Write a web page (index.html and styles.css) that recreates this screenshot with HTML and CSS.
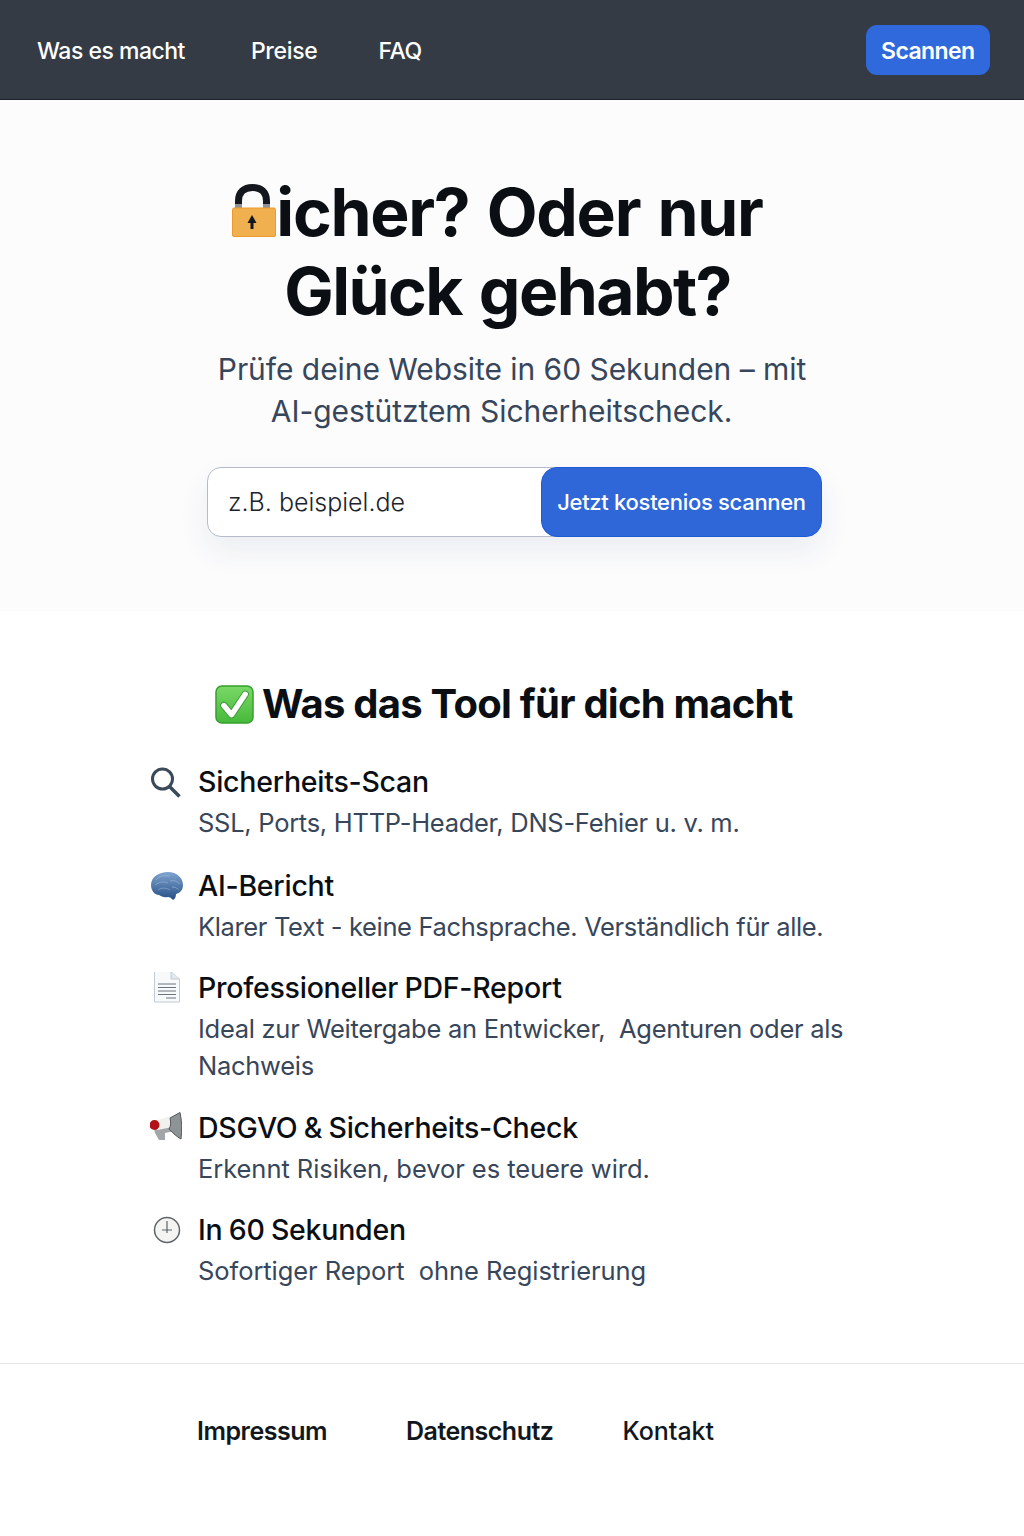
FILE: index.html
```html
<!DOCTYPE html>
<html lang="de">
<head>
  <meta charset="UTF-8">
  <meta name="viewport" content="width=device-width, initial-scale=1.0">
  <link rel="stylesheet" href="styles.css">
  <title>Sicher? Oder nur Glück gehabt?</title>
</head>
<body>
  <header class="topbar">
    <nav class="topnav">
      <a href="#">Was es macht</a>
      <a href="#">Preise</a>
      <a href="#">FAQ</a>
    </nav>
    <a class="scan-link" href="#">Scannen</a>
  </header>

  <section class="hero">
    <h1>
      <span class="title-one"><svg class="lock" width="44" height="53" viewBox="0 0 44 53" aria-hidden="true">
        <path d="M6.500 25V17C6.500 8 12 3.500 20.500 3.500S34.500 8 34.500 17V25" fill="none" stroke="#14181e" stroke-width="7"/>
        <rect x="3" y="20" width="7" height="4" fill="#8d9196"/>
        <rect x="31" y="20" width="7" height="4" fill="#8d9196"/>
        <rect x="0.500" y="24" width="43" height="28.500" rx="1.500" fill="#f0b04f" stroke="#ee9a2a"/>
        <path d="M18.500 45V39H15.500L20 31 24.500 39H21.500V45Z" fill="#14181e"/>
      </svg>icher? Oder nur</span>
      <span class="title-two">Glück gehabt?</span>
    </h1>
    <p class="lead">Prüfe deine Website in 60 Sekunden – mit</p>
    <p class="lead lead-two">AI-gestütztem Sicherheitscheck.</p>
    <form class="scan-form">
      <input type="text" placeholder="z.B. beispiel.de">
      <button type="button">Jetzt kostenios scannen</button>
    </form>
  </section>

  <section class="features">
    <h2>
      <svg width="39" height="39" viewBox="0 0 40 40" aria-hidden="true">
        <defs>
          <linearGradient id="checkFill" x1="0" y1="0" x2="0" y2="1">
            <stop offset="0" stop-color="#7ad867"/>
            <stop offset="1" stop-color="#46b93b"/>
          </linearGradient>
        </defs>
        <rect x="1" y="1" width="38" height="38" rx="6" fill="url(#checkFill)" stroke="#35a02d" stroke-width="1.500"/>
        <path d="M9 21L17 30.500 31 9.500" fill="none" stroke="#3c9a35" stroke-width="7.500" stroke-linejoin="round" stroke-linecap="round"/>
        <path d="M9 21L17 30.500 31 9.500" fill="none" stroke="#fff" stroke-width="5.500" stroke-linejoin="round" stroke-linecap="round"/>
      </svg>
      Was das Tool für dich macht
    </h2>
    <ul class="feature-list">
      <li>
        <svg width="32" height="32" viewBox="0 0 32 32" aria-hidden="true">
          <circle cx="12.500" cy="13" r="10" fill="none" stroke="#3b4a58" stroke-width="3"/>
          <path d="M19.500 20.500L29.500 30.500" stroke="#3b4a58" stroke-width="3.500"/>
        </svg>
        <div>
          <h3>Sicherheits-Scan</h3>
          <p>SSL, Ports, HTTP-Header, DNS-Fehier u. v. m.</p>
        </div>
      </li>
      <li>
        <svg width="34" height="32" viewBox="0 0 34 32" aria-hidden="true">
          <defs>
            <linearGradient id="brainFill" x1="0" y1="0" x2="0" y2="1">
              <stop offset="0" stop-color="#7fa4d0"/>
              <stop offset="1" stop-color="#274f85"/>
            </linearGradient>
          </defs>
          <path d="M1 15C1 7 9 2 18 2C27 2 33 8 33 15C33 20 30 23 26 24C26 27 25 29 23 30C21 28 20 27 18 27C14 28 11 26 9 25C5 25 1 21 1 15Z" fill="url(#brainFill)"/>
          <path d="M6 10C9 6 14 5 20 6M5 15C9 12 14 11 18 13M20 11C24 10 27 11 30 14M8 20C12 17 17 18 20 20M22 17C25 17 27 18 29 20" fill="none" stroke="#a9c3e2" stroke-width="1" stroke-opacity="0.500"/>
        </svg>
        <div>
          <h3>AI-Bericht</h3>
          <p class="tight">Klarer Text - keine Fachsprache. Verständlich für alle.</p>
        </div>
      </li>
      <li>
        <svg width="32" height="32" viewBox="0 2 32 32" aria-hidden="true">
          <path d="M4.500 1.500H21L29.500 9V32H4.500Z" fill="#f7f9fb" stroke="#c3cad3"/>
          <path d="M21 1.500V9H29.500" fill="#e3e8ee" stroke="#c3cad3"/>
          <path d="M8 14H26M8 17.500H26M8 21H26M8 24.500H26M16 28H26" stroke="#6d7680" stroke-width="1.200"/>
        </svg>
        <div>
          <h3>Professioneller PDF-Report</h3>
          <p>Ideal zur Weitergabe an Entwicker,&nbsp; Agenturen oder als Nachweis</p>
        </div>
      </li>
      <li>
        <svg width="32" height="32" viewBox="0 0 32 32" aria-hidden="true">
          <path d="M4 16L21 6 25 19 15 21 15 28 9 28 5 21Z" fill="#a2a6a9"/>
          <path d="M5 9L20 4 23 15 7 18Z" fill="#f1f1f0"/>
          <path d="M20 6L30 0.500C32 9 32 18 31 27C27 25 23 21 19 17C21 14 21 10 20 6Z" fill="#8e9396" stroke="#55595c"/>
          <circle cx="4.500" cy="13" r="5" fill="#b01218"/>
        </svg>
        <div>
          <h3>DSGVO &amp; Sicherheits-Check</h3>
          <p class="loose">Erkennt Risiken, bevor es teuere wird.</p>
        </div>
      </li>
      <li>
        <svg width="32" height="32" viewBox="0 0 32 32" aria-hidden="true">
          <circle cx="17" cy="16" r="12.500" fill="#f4f4f2" stroke="#5f6468" stroke-width="1.500"/>
          <path d="M17 7V19M12 16H22" stroke="#5f6468" stroke-width="1.200"/>
        </svg>
        <div>
          <h3>In 60 Sekunden</h3>
          <p class="loose">Sofortiger Report&nbsp; ohne Registrierung</p>
        </div>
      </li>
    </ul>
  </section>

  <footer class="footer">
    <a class="strong" href="#">Impressum</a>
    <a class="strong" href="#">Datenschutz</a>
    <a href="#">Kontakt</a>
  </footer>
</body>
</html>
```

FILE: styles.css
```css
body {
  font-family: 'Inter', 'Liberation Sans', sans-serif;
  margin: 0;
  padding: 0;
  background-color: #fff;
  color: #0b0f14;
}
a {
  text-decoration: none;
}
.topbar {
  display: flex;
  justify-content: space-between;
  align-items: center;
  height: 99px;
  padding: 0 34px 0 37px;
  background-color: #343b44;
  border-bottom: 1px solid #1d2228;
}
.topnav {
  display: flex;
  gap: 65px;
  padding-top: 2px;
}
.topnav a {
  color: #fff;
  font-size: 23px;
  font-weight: 500;
  letter-spacing: -0.5px;
}
.topnav a:nth-child(2) {
  margin: 0 -4px 0 1px;
  letter-spacing: -0.3px;
}
.scan-link {
  display: block;
  margin-top: 1px;
  padding: 12px 15.500px 10px;
  background-color: #2f69dc;
  border-radius: 11px;
  color: #fff;
  font-size: 23px;
  font-weight: 600;
  letter-spacing: -0.6px;
}
.hero {
  height: 510px;
  padding-top: 1px;
  background-color: #fcfcfd;
  text-align: center;
}
h1 {
  margin: 72px 0 0;
  font-size: 66px;
  line-height: 79px;
  font-weight: 700;
  letter-spacing: -1.3px;
  word-spacing: 3px;
}
.title-one {
  display: block;
  padding-right: 29px;
}
.title-two {
  display: block;
  padding-right: 9px;
  letter-spacing: -1.6px;
}
.lock {
  vertical-align: -1px;
}
.lead {
  margin: 0;
  font-size: 30px;
  line-height: 42px;
  color: #37465a;
  letter-spacing: -0.05px;
}
h1 + .lead {
  margin-top: 17px;
}
.lead-two {
  padding-right: 21px;
}
.scan-form {
  display: flex;
  width: 615px;
  height: 70px;
  margin: 35px 0 0 207px;
  border-radius: 16px;
  box-shadow: 0 14px 30px rgba(40, 60, 100, 0.08);
}
.scan-form input {
  flex: 1;
  min-width: 0;
  margin-right: -16px;
  padding: 0 36px 0 20px;
  background-color: #fff;
  border: 1px solid #b4bcca;
  border-radius: 14px 0 0 14px;
  font-family: inherit;
  font-size: 25px;
  font-weight: 300;
}
.scan-form input::placeholder {
  color: #1c232c;
  opacity: 1;
}
.scan-form button {
  position: relative;
  width: 281px;
  padding: 0;
  background-color: #2f66d8;
  border: 1px solid #1f5ad6;
  border-radius: 16px;
  color: #fff;
  font-family: inherit;
  font-size: 22px;
  font-weight: 500;
  letter-spacing: -0.3px;
}
.features {
  padding: 53px 0 0 150px;
}
h2 {
  display: flex;
  align-items: center;
  gap: 8px;
  margin: 0 0 0 65px;
  font-size: 40px;
  line-height: 80px;
  font-weight: 700;
  letter-spacing: -0.75px;
}
.feature-list {
  list-style-type: none;
  margin: 18px 0 0;
  padding: 0;
  width: 720px;
}
.feature-list li {
  display: flex;
  margin-bottom: 23px;
}
.feature-list li:first-child {
  margin-bottom: 25px;
}
.feature-list li:nth-child(3) {
  margin-bottom: 24px;
}
.feature-list svg {
  flex: none;
  margin: 4px 16px 0 0;
}
.feature-list li:nth-child(2) svg {
  margin-right: 14px;
}
h3 {
  margin: 0;
  font-size: 28.500px;
  line-height: 40px;
  font-weight: 500;
  letter-spacing: -0.25px;
  word-spacing: -1px;
}
.feature-list p {
  margin: 2px 0 0;
  font-size: 25.500px;
  line-height: 37px;
  color: #37465a;
  letter-spacing: -0.28px;
}
.feature-list p.tight {
  letter-spacing: -0.36px;
}
.feature-list p.loose {
  letter-spacing: -0.06px;
}
.footer {
  display: flex;
  gap: 69px;
  margin-top: 74px;
  padding: 52px 0 0 197px;
  border-top: 1px solid #e2e5e9;
}
.footer a {
  color: #12171d;
  font-size: 25px;
  font-weight: 500;
  letter-spacing: 0;
}
.footer .strong {
  font-weight: 600;
  letter-spacing: -0.5px;
}
.footer .strong:first-child {
  margin-right: 10px;
}
```
